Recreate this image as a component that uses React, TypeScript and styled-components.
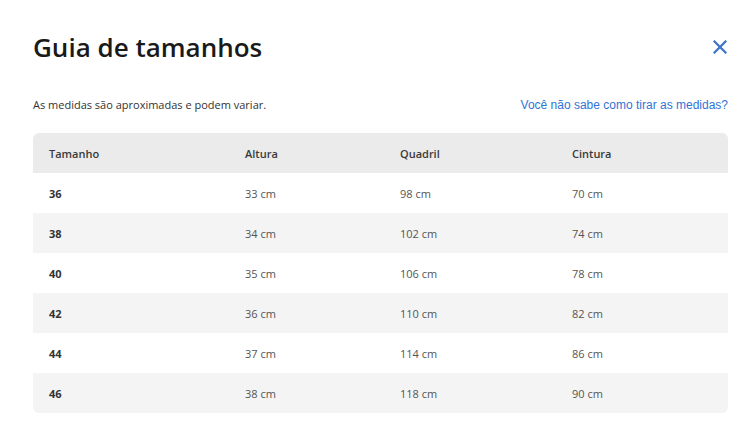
import React from 'react';
import styled, { createGlobalStyle } from 'styled-components';

interface SizeRow {
  size: string;
  altura: string;
  quadril: string;
  cintura: string;
}

const GlobalStyle = createGlobalStyle`
  html, body {
    margin: 0;
    padding: 0;
    background: #fff;
  }
  body {
    font-family: "Open Sans", Lato, sans-serif;
    color: #333;
  }
`;

const Container = styled.div`
  width: 755px;
  height: 433px;
  box-sizing: border-box;
  padding: 30px 27px 0 33px;
`;

const Header = styled.div`
  display: flex;
  align-items: center;
  justify-content: space-between;
  height: 34px;
`;

const Title = styled.h1`
  margin: 0;
  font-family: "Open Sans", sans-serif;
  font-size: 26px;
  font-weight: 600;
  color: #1a1a1a;
`;

const CloseButton = styled.button`
  border: none;
  background: none;
  padding: 0;
  width: 14px;
  height: 14px;
  margin-right: 1px;
  display: flex;
  cursor: pointer;
`;

const InfoBar = styled.div`
  display: flex;
  justify-content: space-between;
  align-items: baseline;
  margin-top: 33px;
`;

const Note = styled.p`
  margin: 0;
  font-size: 11px;
  color: #333;
`;

const HelpLink = styled.a`
  font-family: "Liberation Sans", Arial, sans-serif;
  font-size: 12px;
  color: #3074d6;
  text-decoration: none;
  cursor: pointer;
`;

const Table = styled.div`
  margin-top: 21px;
  border-radius: 6px;
  overflow: hidden;
`;

const Row = styled.div<{ $bg: string }>`
  display: grid;
  grid-template-columns: 196px 155px 172px 1fr;
  height: 40px;
  align-items: center;
  background: ${(p) => p.$bg};
`;

const Cell = styled.div<{ $strong?: boolean }>`
  padding-left: 16px;
  font-size: 11px;
  font-weight: ${(p) => (p.$strong ? 700 : 400)};
  color: ${(p) => (p.$strong ? '#333' : '#555')};
`;

const HeadCell = styled(Cell)`
  font-weight: 600;
  color: #3a3a3a;
`;

const ROWS: SizeRow[] = [
  { size: '36', altura: '33 cm', quadril: '98 cm', cintura: '70 cm' },
  { size: '38', altura: '34 cm', quadril: '102 cm', cintura: '74 cm' },
  { size: '40', altura: '35 cm', quadril: '106 cm', cintura: '78 cm' },
  { size: '42', altura: '36 cm', quadril: '110 cm', cintura: '82 cm' },
  { size: '44', altura: '37 cm', quadril: '114 cm', cintura: '86 cm' },
  { size: '46', altura: '38 cm', quadril: '118 cm', cintura: '90 cm' },
];

const App: React.FC = () => {
  return (
    <>
      <GlobalStyle />
      <Container>
        <Header>
          <Title>Guia de tamanhos</Title>
          <CloseButton aria-label="Fechar">
            <svg width="14" height="14" viewBox="0 0 14 14">
              <path d="M1.5 1.5 L12.5 12.5 M12.5 1.5 L1.5 12.5" stroke="#3b73c9" strokeWidth="2.2" strokeLinecap="square" />
            </svg>
          </CloseButton>
        </Header>
        <InfoBar>
          <Note>As medidas são aproximadas e podem variar.</Note>
          <HelpLink>Você não sabe como tirar as medidas?</HelpLink>
        </InfoBar>
        <Table>
          <Row $bg="#ebebeb">
            <HeadCell>Tamanho</HeadCell>
            <HeadCell>Altura</HeadCell>
            <HeadCell>Quadril</HeadCell>
            <HeadCell>Cintura</HeadCell>
          </Row>
          {ROWS.map((r, i) => (
            <Row key={r.size} $bg={i % 2 === 0 ? '#ffffff' : '#f4f4f4'}>
              <Cell $strong>{r.size}</Cell>
              <Cell>{r.altura}</Cell>
              <Cell>{r.quadril}</Cell>
              <Cell>{r.cintura}</Cell>
            </Row>
          ))}
        </Table>
      </Container>
    </>
  );
};

export default App;
